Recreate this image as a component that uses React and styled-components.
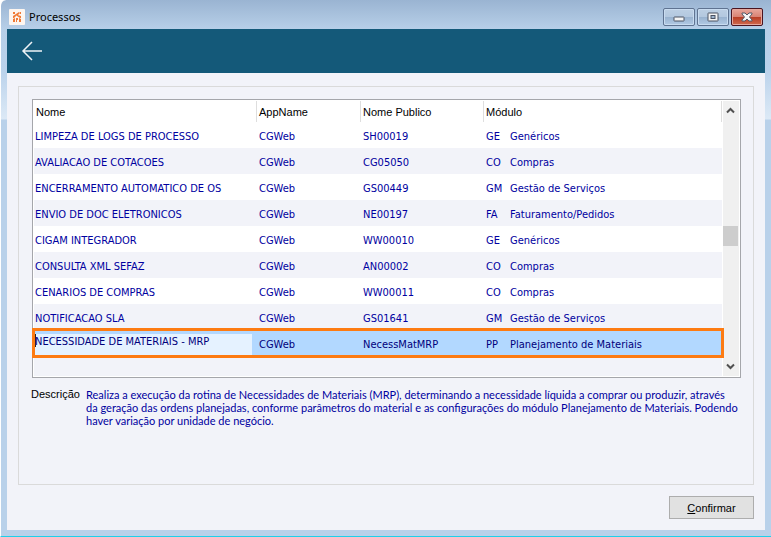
import React, { useState } from "react";
import styled, { createGlobalStyle, css } from "styled-components";

const GlobalStyle = createGlobalStyle`
  *, *::before, *::after { box-sizing: border-box; }
  html, body, #root { height: 100%; }
  body { margin: 0; overflow: hidden; background: #ffffff; }
  body, button, input { font-family: "DejaVu Sans Condensed", "DejaVu Sans", sans-serif; font-size: 11px; }
`;

const WindowFrame = styled.div`
  display: flex;
  flex-direction: column;
  min-height: 100vh;
  padding: 0 6px 6px;
  border-left: 1px solid #ffffff;
  border-bottom: 1px solid #1fd0ea;
  border-top-left-radius: 6px;
  background: linear-gradient(#9ab4d2 0, #b7cfe8 29px, #bad2eb 70px, #dce9f6 119px, #b9d1ea 120px);
`;

const TitleBar = styled.header`
  display: flex;
  align-items: center;
  height: 29px;
  padding: 5px 2px 0;
  gap: 4px;
`;

const Title = styled.h1`
  flex: 1;
  margin: 0;
  font: 11px/16px "Noto Sans", sans-serif;
  color: #000000;
`;

const WindowButtons = styled.div`
  display: flex;
  gap: 2px;
`;

const WindowButton = styled.button`
  display: flex;
  align-items: center;
  justify-content: center;
  width: 32px;
  height: 18px;
  padding: 0;
  border: 1px solid ${(p) => (p.$close ? "#4a1420" : "#5f7391")};
  border-radius: 2px;
  box-shadow: inset 0 0 0 1px ${(p) => (p.$close ? "#e5a79d" : "#c9dcf0")};
  background: ${(p) =>
    p.$close
      ? "linear-gradient(#e8a79c 0, #d98374 48%, #b83c24 50%, #cf6a4e 100%)"
      : "linear-gradient(#bccfe4 0, #b3c8df 48%, #98b2cf 50%, #b2cae4 100%)"};
`;

const Toolbar = styled.nav`
  display: flex;
  align-items: center;
  height: 44px;
  padding: 0 14px;
  background: #145979;
`;

const BackButton = styled.button`
  display: flex;
  padding: 0;
  border: 0;
  background: none;
`;

const Content = styled.main`
  display: flex;
  flex: 1;
  flex-direction: column;
  gap: 11px;
  padding: 13px 11px 11px;
  background: #f2f3f9;
`;

const Panel = styled.section`
  flex: 1;
  padding: 12px 12px 12px 13px;
  border: 1px solid #dadada;
`;

const GridBox = styled.div`
  display: flex;
  padding: 1px;
  border: 1px solid #a5a6ab;
  background: #ffffff;
`;

const GridBody = styled.div`
  flex: 1;
  min-width: 0;
  min-height: 275px;
  background: linear-gradient(#ffffff 40px, #f2f3f9 40px);
`;

const Table = styled.table`
  width: 100%;
  table-layout: fixed;
  border-collapse: separate;
  border-spacing: 0;
`;

const Col = styled.col`
  width: ${(p) => p.$width};
`;

const HeadCell = styled.th`
  height: 21px;
  padding: 1px 2px 0;
  border-right: 1px solid #dedede;
  background: #ffffff;
  font: 11px/16px "Liberation Sans", sans-serif;
  text-align: left;
  color: #000000;
`;

const Cell = styled.td`
  height: 26px;
  padding: 3px 2px 0;
  overflow: hidden;
  white-space: nowrap;
  line-height: 16px;
  &:first-child { padding-left: 1px; }
`;

const Row = styled.tr`
  color: #0000a0;
  background: ${(p) => (p.$striped ? "#f2f3f9" : "#ffffff")};
  ${(p) =>
    p.$selected &&
    css`
      color: #00007c;
      background: #b2d8ff;
      outline: 3px solid #fd7b12;
      outline-offset: -1px;
      position: relative;
    `}
`;

const NameInput = styled.input`
  display: block;
  width: 217px;
  height: 22px;
  padding: 0 0 7px;
  border: 0;
  background: linear-gradient(#222222, #222222) 0 0 / 1px 13px no-repeat #e5f2ff;
  color: #00007c;
  outline: none;
`;

const ModuleCode = styled.span`
  display: inline-block;
  width: 24px;
`;

const ScrollBar = styled.div`
  display: flex;
  flex-direction: column;
  width: 17px;
  padding-right: 1px;
  border-left: 1px solid #ffffff;
  background: #f0f0f0;
`;

const ScrollButton = styled.button`
  display: flex;
  align-items: center;
  justify-content: center;
  height: 19px;
  padding: 0;
  border: 0;
  background: none;
`;

const ScrollTrack = styled.div`
  display: grid;
  flex: 1;
  grid-template-rows: 106fr 20px 111fr;
`;

const ScrollThumb = styled.div`
  grid-row: 2;
  background: #cdcdcd;
`;

const Description = styled.dl`
  display: grid;
  grid-template-columns: 55px 1fr;
  margin: 10px 0 0 -1px;
  line-height: 13px;
`;

const DescriptionLabel = styled.dt`
  font-family: "Liberation Sans", sans-serif;
  color: #000000;
`;

const DescriptionText = styled.dd`
  margin: 0;
  font-family: Lato, sans-serif;
  color: #0000a0;
`;

const Footer = styled.footer`
  display: flex;
  justify-content: flex-end;
`;

const ConfirmButton = styled.button`
  width: 85px;
  height: 23px;
  padding: 0;
  border: 1px solid #adadad;
  background: #e1e1e1;
  font-family: "Liberation Sans", sans-serif;
  color: #000000;
`;

const AppLogo = () => (
  <svg width="16" height="16" viewBox="0 0 16 16" aria-hidden="true">
    <rect width="16" height="16" rx="1" fill="#fdf6f0" />
    <g fill="#f07a35">
      <path d="M4 3h2v2H4zM7 5l3-2 1 1-3 3zM11 3h1v2h-1zM4 7l3-2 1 1-3 3H4zM9 6l3 1v2h-1L8 7z" />
      <path d="M4 10l2-1v4H4zM7 9h2v2H8v2H7zM10 9l2 1v3h-2z" />
    </g>
  </svg>
);

const MinimizeIcon = () => (
  <svg width="12" height="12" viewBox="0 0 12 12" aria-hidden="true">
    <rect x="1" y="6" width="10" height="4" rx="0.5" fill="#f4f4f4" stroke="#4b5262" />
  </svg>
);

const MaximizeIcon = () => (
  <svg width="12" height="12" viewBox="0 0 12 12" aria-hidden="true">
    <rect x="1" y="2" width="10" height="8" rx="0.5" fill="#f4f4f4" stroke="#4b5262" />
    <rect x="4" y="4.500" width="4" height="3" fill="#9fb6d0" stroke="#4b5262" />
  </svg>
);

const CloseIcon = () => (
  <svg width="12" height="12" viewBox="0 0 12 12" aria-hidden="true">
    <path d="M1 2h3l2 2 2-2h3v1L8.500 6 11 9v1H8L6 8l-2 2H1V9l2.500-3L1 3z" fill="#f6f6f6" stroke="#555a68" />
  </svg>
);

const BackIcon = () => (
  <svg width="22" height="20" viewBox="0 0 22 20" fill="none" stroke="#eef3f6" strokeWidth="1.500" aria-hidden="true">
    <path d="M11 1L2 10l9 9M2 10h19" />
  </svg>
);

const Chevron = ({ down }) => (
  <svg width="9" height="7" viewBox="0 0 9 7" fill="none" stroke="#505050" strokeWidth="2" aria-hidden="true">
    <path d={down ? "M1 1.500l3.500 3.500L8 1.500" : "M1 5.500L4.500 2 8 5.500"} />
  </svg>
);

const columns = [
  { label: "Nome", width: "223px" },
  { label: "AppName", width: "104px" },
  { label: "Nome Publico", width: "123px" },
  { label: "Módulo", width: "auto" },
];

const processes = [
  ["LIMPEZA DE LOGS DE PROCESSO", "SH00019", "GE", "Genéricos"],
  ["AVALIACAO DE COTACOES", "CG05050", "CO", "Compras"],
  ["ENCERRAMENTO AUTOMATICO DE OS", "GS00449", "GM", "Gestão de Serviços"],
  ["ENVIO DE DOC ELETRONICOS", "NE00197", "FA", "Faturamento/Pedidos"],
  ["CIGAM INTEGRADOR", "WW00010", "GE", "Genéricos"],
  ["CONSULTA XML SEFAZ", "AN00002", "CO", "Compras"],
  ["CENARIOS DE COMPRAS", "WW00011", "CO", "Compras"],
  ["NOTIFICACAO SLA", "GS01641", "GM", "Gestão de Serviços"],
  ["NECESSIDADE DE MATERIAIS - MRP", "NecessMatMRP", "PP", "Planejamento de Materiais"],
];

const selectedIndex = 8;

export default function App() {
  const [name, setName] = useState(processes[selectedIndex][0]);

  return (
    <>
      <GlobalStyle />
      <WindowFrame>
        <TitleBar>
          <AppLogo />
          <Title>Processos</Title>
          <WindowButtons>
            <WindowButton aria-label="Minimizar"><MinimizeIcon /></WindowButton>
            <WindowButton aria-label="Maximizar"><MaximizeIcon /></WindowButton>
            <WindowButton $close aria-label="Fechar"><CloseIcon /></WindowButton>
          </WindowButtons>
        </TitleBar>
        <Toolbar>
          <BackButton aria-label="Voltar"><BackIcon /></BackButton>
        </Toolbar>
        <Content>
          <Panel>
            <GridBox>
              <GridBody>
                <Table>
                  <colgroup>
                    {columns.map((c) => <Col key={c.label} $width={c.width} />)}
                  </colgroup>
                  <thead>
                    <tr>{columns.map((c) => <HeadCell key={c.label} scope="col">{c.label}</HeadCell>)}</tr>
                  </thead>
                  <tbody>
                    {processes.map(([label, publicName, code, module], i) => (
                      <Row key={label} $striped={i % 2 === 1} $selected={i === selectedIndex}>
                        <Cell>
                          {i === selectedIndex ? (
                            <NameInput aria-label="Nome" value={name} onChange={(e) => setName(e.target.value)} />
                          ) : label}
                        </Cell>
                        <Cell>CGWeb</Cell>
                        <Cell>{publicName}</Cell>
                        <Cell><ModuleCode>{code}</ModuleCode>{module}</Cell>
                      </Row>
                    ))}
                  </tbody>
                </Table>
              </GridBody>
              <ScrollBar>
                <ScrollButton aria-label="Rolar para cima"><Chevron /></ScrollButton>
                <ScrollTrack><ScrollThumb /></ScrollTrack>
                <ScrollButton aria-label="Rolar para baixo"><Chevron down /></ScrollButton>
              </ScrollBar>
            </GridBox>
            <Description>
              <DescriptionLabel>Descrição</DescriptionLabel>
              <DescriptionText>
                Realiza a execução da rotina de Necessidades de Materiais (MRP), determinando a necessidade líquida a comprar ou produzir, através<br />
                da geração das ordens planejadas, conforme parâmetros do material e as configurações do módulo Planejamento de Materiais. Podendo<br />
                haver variação por unidade de negócio.
              </DescriptionText>
            </Description>
          </Panel>
          <Footer>
            <ConfirmButton><u>C</u>onfirmar</ConfirmButton>
          </Footer>
        </Content>
      </WindowFrame>
    </>
  );
}
